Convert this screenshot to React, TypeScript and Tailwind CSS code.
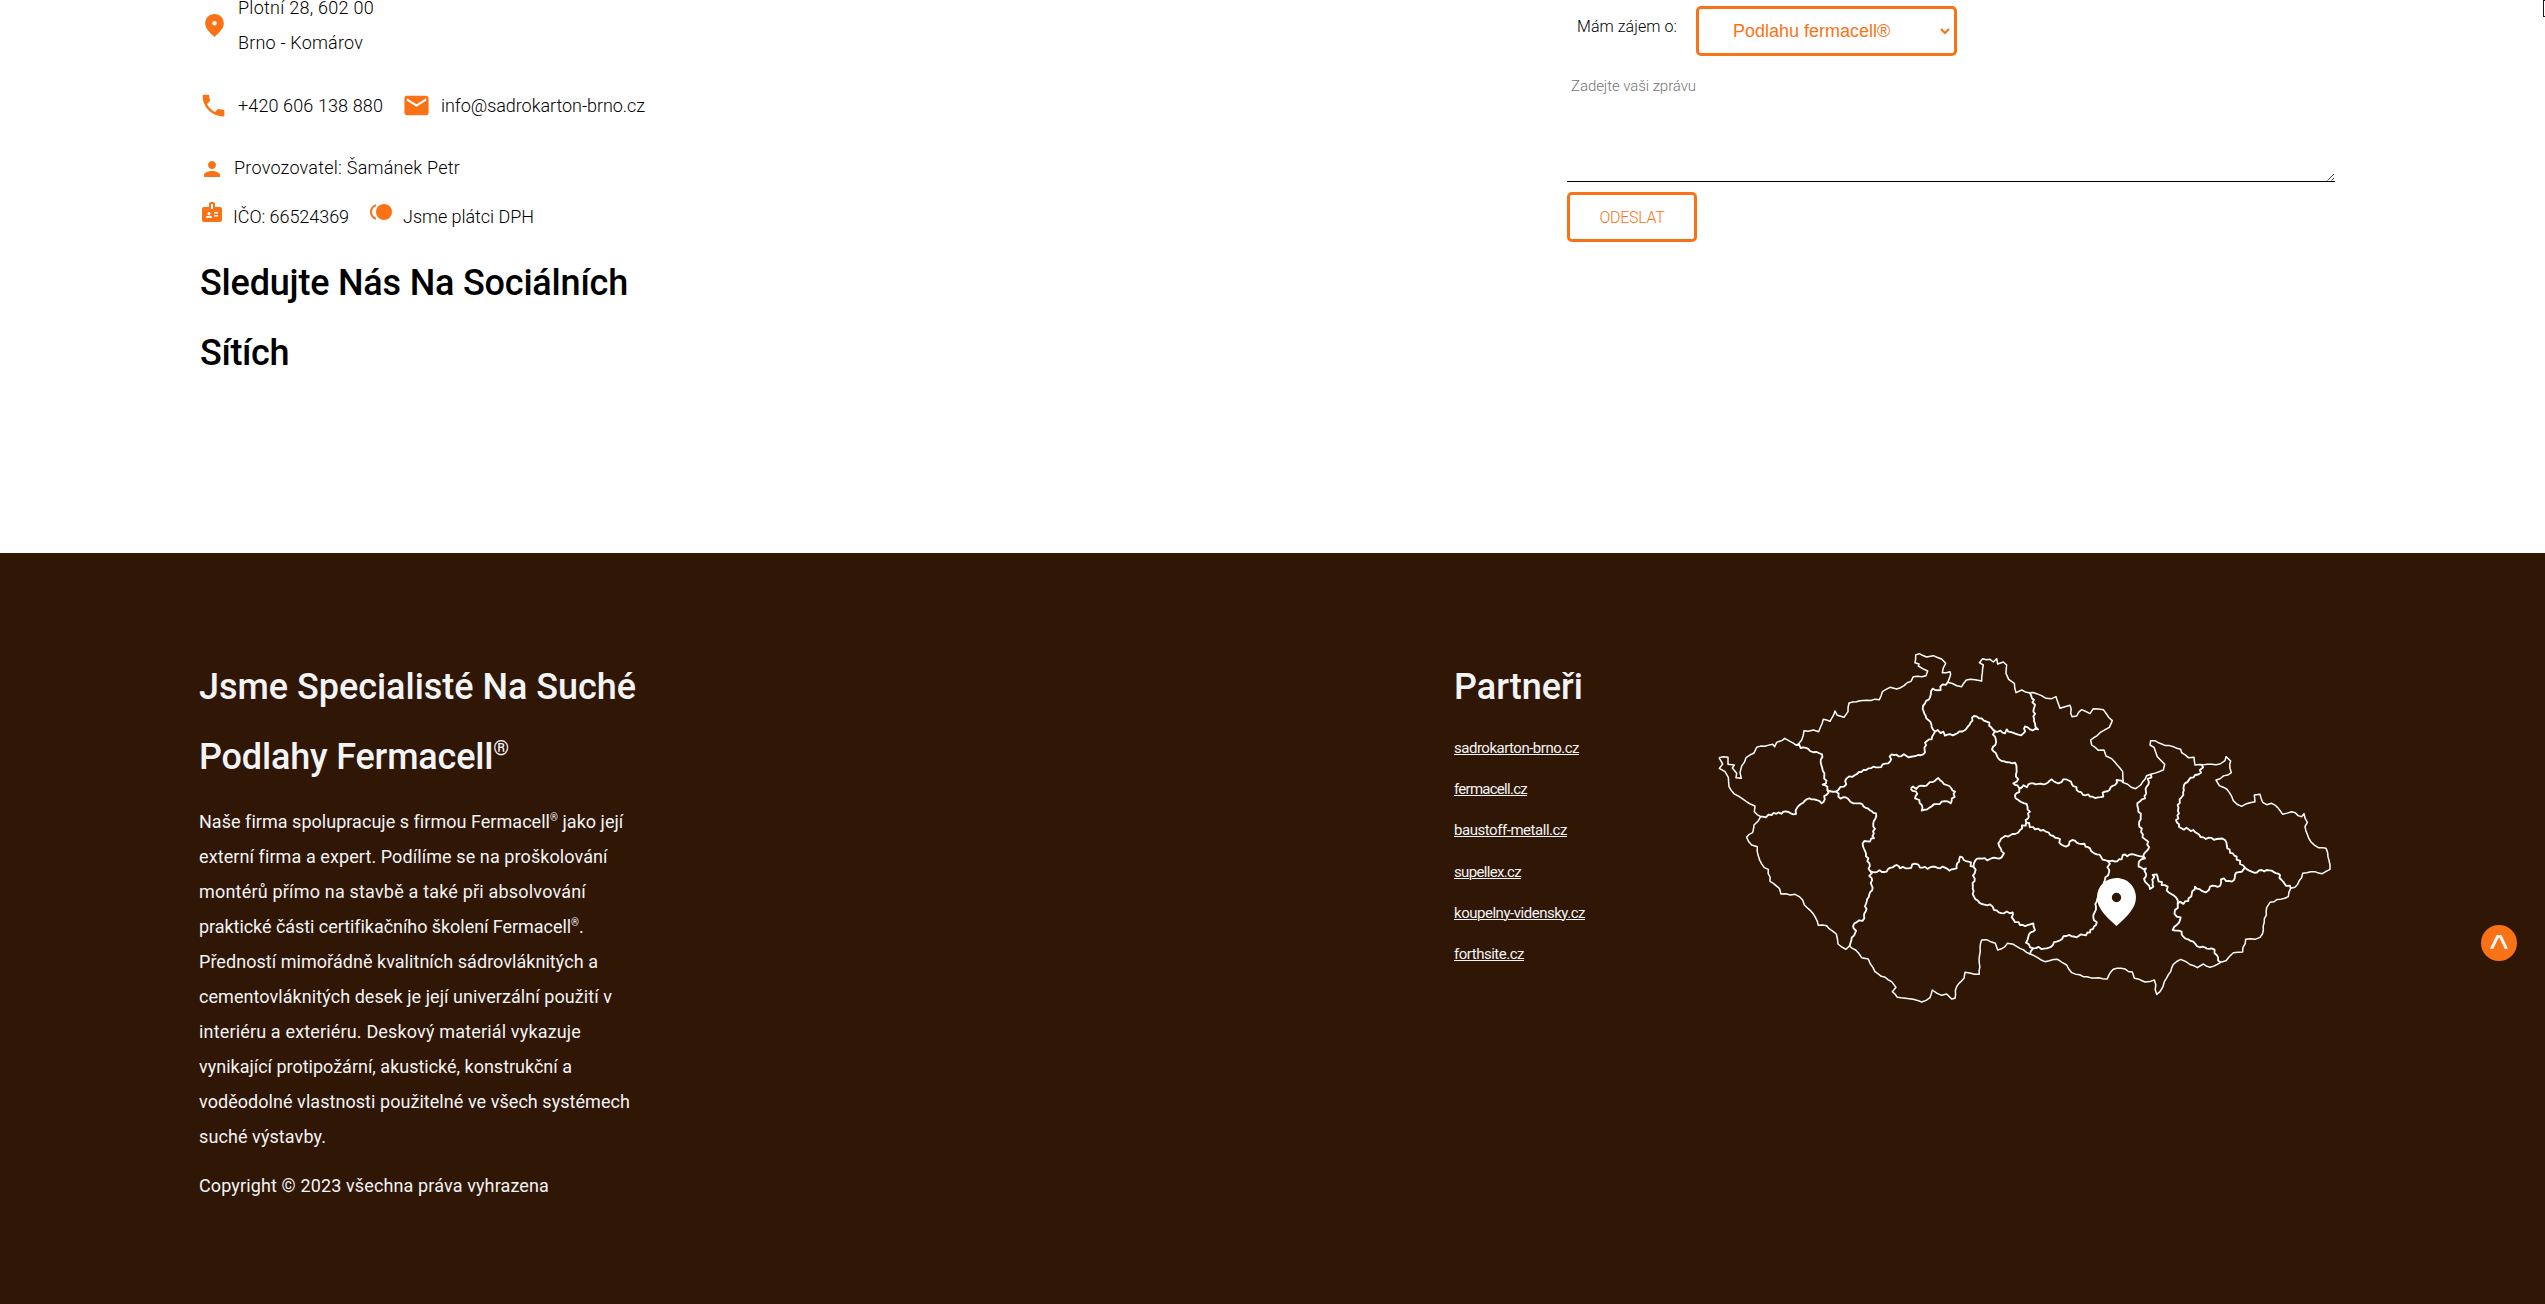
import { useLayoutEffect, useRef, useState } from "react";
import { MdBadge, MdEmail, MdPerson, MdPhone } from "react-icons/md";

type LineProps = { text: string; width: number; className?: string; textClassName?: string };

/* One line of text whose tracking is adjusted to fill a given measure. */
function Line({ text, width, className = "", textClassName = "" }: LineProps) {
  const ref = useRef<HTMLSpanElement>(null);
  const [spacing, setSpacing] = useState(0);
  useLayoutEffect(() => {
    if (ref.current) {
      const natural = ref.current.getBoundingClientRect().width - spacing * text.length;
      setSpacing((width - natural) / text.length);
    }
  }, [text, width]);
  return (
    <span className={`block whitespace-nowrap ${className}`}>
      <span ref={ref} className={`inline-block ${textClassName}`} style={{ letterSpacing: `${spacing}px` }}>
        {text.split(/(®)/).map((part, i) =>
          part === "®" ? (
            <span key={i} className="align-[0.7em] text-[0.56em] leading-none">
              {part}
            </span>
          ) : (
            part
          ),
        )}
      </span>
    </span>
  );
}

function Pin({ className }: { className: string }) {
  return (
    <svg viewBox="0 0 116 143" className={className} fill="currentColor">
      <path
        fillRule="evenodd"
        d="M58 0C25 0 0 25 0 58c0 31 24 54 58 85 34-31 58-54 58-85C116 26 91 0 58 0zm0 44a14 14 0 1 1 0 28 14 14 0 0 1 0-28z"
      />
    </svg>
  );
}

function Toll({ className }: { className: string }) {
  return (
    <svg viewBox="0 0 24 24" className={className} fill="currentColor">
      <circle cx="15" cy="12" r="8" />
      <path d="M3 12c0-2.61 1.67-4.83 4-5.65V4.26C3.55 5.15 1 8.27 1 12s2.55 6.85 6 7.74v-2.09c-2.33-.82-4-3.04-4-5.65z" />
    </svg>
  );
}

const border =
  "57,353 84,352 84,373 103,375 97,384 110,400 108,413 124,415 120,398 125,378 138,353 162,339 170,322 218,313 224,320 230,307 247,301 254,295 270,304 289,316 305,300 312,272 325,274 340,270 356,275 370,238 380,240 390,244 405,213 412,226 432,232 444,215 447,189 480,182 500,181 538,179 547,155 570,142 590,147 633,124 640,110 678,107 683,93 668,86 655,78 657,72 645,68 647,45 658,41 680,51 700,47 725,57 737,70 727,98 750,95 752,103 743,127 785,140 799,120 825,119 845,123 850,75 838,68 848,56 870,58 880,66 890,56 893,72 910,66 920,75 918,100 926,118 943,130 948,158 965,150 988,158 1010,161 1038,175 1055,176 1068,170 1080,205 1110,196 1116,230 1130,228 1145,209 1170,221 1180,206 1210,209 1237,242 1228,262 1200,278 1172,300 1175,315 1195,331 1212,330 1218,348 1235,356 1268,395 1270,428 1307,446 1322,435 1340,407 1352,403 1390,390 1394,373 1372,350 1362,322 1350,315 1352,302 1365,302 1385,312 1420,320 1442,328 1445,338 1465,353 1482,352 1485,375 1510,374 1560,372 1575,362 1578,350 1592,363 1590,385 1594,398 1548,420 1558,437 1580,447 1600,482 1625,499 1650,488 1665,485 1663,465 1680,463 1688,487 1700,494 1715,490 1735,505 1748,523 1775,515 1805,530 1812,521 1822,547 1815,560 1833,606 1855,623 1878,625 1890,688 1867,701 1845,695 1808,700 1805,713 1785,742 1772,745 1765,770 1710,787 1700,803 1690,870 1680,892 1665,898 1637,898 1628,936 1600,938 1578,962 1562,967 1530,982 1510,972 1492,983 1460,966 1442,958 1420,973 1412,995 1393,1025 1380,1055 1370,1063 1363,1020 1335,1026 1303,1015 1297,996 1263,985 1240,988 1222,1017 1208,1016 1150,1010 1115,998 1100,975 1073,958 1035,965 990,942 960,925 940,913 922,910 915,920 893,930 886,910 860,899 845,900 838,970 838,1003 795,997 792,1015 770,1040 765,1075 755,1077 740,1062 725,1066 697,1050 690,1073 665,1086 640,1078 592,1072 577,1055 588,1042 575,1025 525,995 505,957 485,953 467,930 448,918 438,928 414,912 409,882 380,857 355,856 345,830 313,795 308,780 285,763 243,762 238,745 210,724 205,688 193,683 175,648 172,620 155,615 140,592 158,578 162,555 182,530 163,515 165,498 130,478 103,462 87,440 85,412 75,395 58,385 68,372 57,353";

const regions = [
  "289,316 310,322 330,333 350,336 366,343 364,375 373,400 378,430 368,434 382,440 382,450 408,455",
  "382,450 380,464 365,490 350,480 328,475 292,502 288,522 250,515 215,525 188,530 182,530",
  "408,455 415,450 432,440 440,415 465,405 490,390 520,380 535,382 570,365 575,343 640,349 675,337 675,308 695,298 705,275",
  "743,127 728,133 722,150 698,146 690,172 675,190 668,207 685,240 705,275",
  "705,275 730,275 735,287 765,283 800,265 822,228 845,235 860,245 878,268 915,280 920,268 955,284 970,280 975,259 990,268 1014,268 1005,250 1000,215 1002,180 988,158",
  "878,268 885,290 886,315 876,328 890,345 905,363 945,368 950,395 950,425 940,430 965,443 945,465 955,480 980,492 990,515 978,548",
  "965,443 1000,430 1030,433 1055,418 1075,430 1090,418 1113,425 1130,450 1170,470 1210,470 1208,458 1245,435 1250,420 1270,428",
  "978,548 1005,568 1030,570 1060,588 1080,597 1078,608 1098,620 1117,600 1145,612 1170,625 1190,643 1223,663 1265,658 1268,645 1310,646 1335,655",
  "1352,403 1340,440 1335,475 1312,490 1322,530 1318,560 1335,598 1345,605 1343,630 1333,640 1335,655 1318,663 1316,680 1338,685 1335,725 1350,747 1360,740 1358,705 1370,703 1385,735 1403,740 1400,752 1428,772 1433,792",
  "1433,792 1465,783 1485,740 1518,757 1530,740 1560,738 1563,718 1595,725 1605,705 1635,683 1655,695 1700,690 1740,705 1745,720 1772,745",
  "1505,374 1503,398 1485,405 1455,430 1450,465 1433,495 1437,520 1428,540 1445,565 1480,570 1510,592 1550,597 1575,600 1582,625 1610,650 1620,672 1635,683",
  "1433,792 1425,810 1430,830 1442,832 1430,855 1418,870 1445,875 1450,890 1480,905 1500,922 1535,925 1550,945 1562,967",
  "1223,663 1228,690 1215,720 1200,760 1190,785 1188,800 1180,825 1188,855 1170,878 1130,892 1100,888 1070,905 1040,925 1000,925 990,942",
  "820,680 824,700 818,745 822,770 845,792 870,793 882,810 912,820 938,817 940,838 960,855 990,853 1000,850 1005,870 985,890 978,908 1000,925",
  "978,548 960,570 945,582 910,592 895,610 912,640 905,652 870,657 838,655 822,670 820,680",
  "820,680 805,665 780,650 770,685 748,692 735,683 690,682 660,683 645,671 625,685 600,685 590,675 560,695 510,693",
  "408,455 415,470 445,477 460,490 480,490 528,520 520,560 522,595 488,610 498,640 505,655 510,693",
  "510,693 517,750 500,785 493,835 463,850 465,880 450,915 448,918",
  "632,446 672,438 715,414 740,435 765,455 752,490 725,485 682,508 665,512 658,480 645,475 652,462 632,446",
];

/* Subdivides a polyline and nudges the new points sideways, for a surveyed-border look. */
function roughen(points: string, step: number, amount: number) {
  const pts = points.split(" ").map((p) => p.split(",").map(Number));
  let seed = 7;
  const random = () => {
    seed = (seed * 16807) % 2147483647;
    return seed / 2147483647 - 0.5;
  };
  const out: string[] = [];
  pts.forEach(([x, y], i) => {
    out.push(`${x},${y}`);
    const next = pts[i + 1];
    if (!next) return;
    const dx = next[0] - x;
    const dy = next[1] - y;
    const length = Math.hypot(dx, dy);
    const n = Math.floor(length / step);
    for (let k = 1; k < n; k++) {
      const r = random() * amount;
      out.push(`${(x + (dx * k) / n - (dy / length) * r).toFixed(1)},${(y + (dy * k) / n + (dx / length) * r).toFixed(1)}`);
    }
  });
  return out.join(" ");
}

function CzechMap() {
  return (
    <svg viewBox="0 0 1980 1140" className="h-[380px] w-[660px]" fill="none" stroke="#fff" strokeLinejoin="round">
      <polyline points={roughen(border, 11, 5)} strokeWidth="4.5" />
      {regions.map((r) => (
        <polyline key={r} points={roughen(r, 7, 10)} strokeWidth="5.5" />
      ))}
    </svg>
  );
}

const partners: [string, number][] = [
  ["sadrokarton-brno.cz", 125],
  ["fermacell.cz", 73],
  ["baustoff-metall.cz", 113],
  ["supellex.cz", 67],
  ["koupelny-vidensky.cz", 131],
  ["forthsite.cz", 70],
];

const about: [string, number][] = [
  ["Naše firma spolupracuje s firmou Fermacell® jako její", 423],
  ["externí firma a expert. Podílíme se na proškolování", 408],
  ["montérů přímo na stavbě a také při absolvování", 387],
  ["praktické části certifikačního školení Fermacell®.", 384],
  ["Předností mimořádně kvalitních sádrovláknitých a", 399],
  ["cementovláknitých desek je její univerzální použití v", 413],
  ["interiéru a exteriéru. Deskový materiál vykazuje", 382],
  ["vynikající protipožární, akustické, konstrukční a", 373],
  ["voděodolné vlastnosti použitelné ve všech systémech", 431],
  ["suché výstavby.", 127],
];

export default function App() {
  return (
    <div className="relative h-[1304px] w-full overflow-hidden bg-white font-['Roboto','Liberation_Sans',sans-serif] text-[18px] leading-[35px] font-light text-black">
      <section className="flex h-[553px] overflow-hidden">
        <div className="w-[1567px] shrink-0 pl-[200px]">
          <div className="-mt-[10px] flex h-[70px]">
            <Pin className="mt-[24px] ml-[5px] h-[23px] w-[19px] text-[#f97316]" />
            <div className="ml-[14px]">
              <Line text="Plotní 28, 602 00" width={136} />
              <Line text="Brno - Komárov" width={125} />
            </div>
          </div>
          <div className="mt-[28px] flex h-[35px]">
            <MdPhone className="mt-[3px] -ml-[1px] size-[29px] text-[#f97316]" />
            <Line className="ml-[10px] w-[145px]" text="+420 606 138 880" width={145} />
            <MdEmail className="mt-[3px] ml-[19px] size-[29px] text-[#f97316]" />
            <Line className="ml-[10px]" text="info@sadrokarton-brno.cz" width={204} />
          </div>
          <div className="mt-[27px] flex h-[35px]">
            <MdPerson className="mt-[7px] size-6 text-[#f97316]" />
            <Line className="ml-[10px]" text="Provozovatel: Šamánek Petr" width={226} />
          </div>
          <div className="mt-[14px] flex h-[35px]">
            <MdBadge className="mt-[1px] size-6 text-[#f97316]" />
            <Line className="ml-[9px] w-[116px]" text="IČO: 66524369" width={116} />
            <Toll className="mt-[1px] ml-[20px] size-6 text-[#f97316]" />
            <Line className="ml-[10px]" text="Jsme plátci DPH" width={131} />
          </div>
          <h2 className="mt-[14px] text-[36px] leading-[70px] font-medium">
            <Line text="Sledujte Nás Na Sociálních" width={428} />
            <Line text="Sítích" width={89} />
          </h2>
        </div>

        <form className="w-[768px] shrink-0">
          <div className="flex h-[56px] pt-[6px]">
            <label className="mt-[5px] ml-[10px] w-[119px] text-[16px] leading-[31px]">
              <Line text="Mám zájem o:" width={100} />
            </label>
            <div className="flex h-[50px] w-[261px] items-center justify-between rounded-[5px] border-3 border-[#f97316] pr-[4px] pl-[34px] font-['Liberation_Sans',sans-serif] font-normal text-[#f97316]">
              <span>Podlahu fermacell®</span>
              <svg viewBox="0 0 10 7" className="h-[7px] w-[10px]" fill="none" stroke="currentColor" strokeWidth="2">
                <path d="M1 1l4 4 4-4" />
              </svg>
            </div>
          </div>
          <div className="mt-[15px] flex h-[111px] justify-between border-b border-black pl-[4px]">
            <Line className="text-[15px] leading-[30px] text-[#757575]" text="Zadejte vaši zprávu" width={125} />
            <svg viewBox="0 0 8 8" className="size-2 self-end" fill="none" stroke="#444" strokeWidth="1">
              <path d="M0.5 7.5l6.500-6.500M4.500 7.500l2.500-2.500" />
            </svg>
          </div>
          <button
            type="button"
            className="mt-[10px] flex h-[50px] w-[130px] items-center justify-center rounded-[5px] border-3 border-[#f97316] text-[16px] text-[#f97316]"
          >
            <Line text="ODESLAT" width={65} />
          </button>
        </form>
      </section>

      <footer className="flex h-[751px] bg-[#301605] pt-[87px] text-gray-100">
        <div className="w-[1454px] shrink-0 pt-[12px] pl-[199px]">
          <h2 className="text-[36px] leading-[70px] font-medium">
            <Line text="Jsme Specialisté Na Suché" width={437} />
            <Line text="Podlahy Fermacell®" width={310} />
          </h2>
          <div className="mt-[12px] font-normal">
            {about.map(([text, width]) => (
              <Line key={text} text={text} width={width} />
            ))}
            <Line className="mt-[14px]" text="Copyright © 2023 všechna práva vyhrazena" width={350} />
          </div>
        </div>
        <div className="w-[246px] shrink-0 pt-[12px]">
          <h2 className="text-[36px] leading-[70px] font-medium">
            <Line text="Partneři" width={129} />
          </h2>
          <ul className="mt-[6px] text-[15px] leading-[41.2px] font-normal">
            {partners.map(([name, width]) => (
              <li key={name}>
                <a href="#">
                  <Line textClassName="underline decoration-1 underline-offset-1" text={name} width={width} />
                </a>
              </li>
            ))}
          </ul>
        </div>
        <div className="relative h-[380px] w-[660px] shrink-0">
          <CzechMap />
          <Pin className="absolute top-[238px] left-[397px] h-[48px] w-[39px] text-white" />
        </div>
      </footer>

      <button
        type="button"
        className="absolute top-[925px] right-[28px] flex size-9 items-center justify-center rounded-full bg-[#f97316]"
      >
        <svg viewBox="0 0 18 14" className="mb-[2px] h-[14px] w-[18px]" fill="none" stroke="#f3f4f6" strokeWidth="3">
          <path d="M1.500 14L7.500 1.500h3L16.500 14" />
        </svg>
      </button>
      <div className="absolute top-0 right-0 h-[17px] w-[2px] border-y border-l border-gray-900" />
    </div>
  );
}
